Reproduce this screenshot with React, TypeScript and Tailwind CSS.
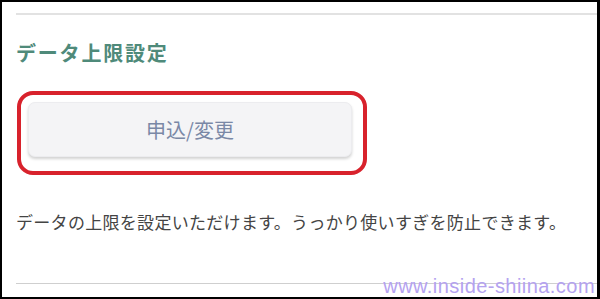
import React from "react";

export default function App() {
  return (
    <div className="relative w-[600px] h-[299px] overflow-hidden border-2 border-r-[3px] border-black bg-white font-['Noto_Sans_CJK_JP','Noto_Sans',sans-serif]">
      <div className="flex flex-col pl-[14px] pt-[11px]">
        <div className="h-[2px] bg-[#e2e2e2]" />
        <h2 className="mt-[25px] text-[20px] font-bold leading-[26px] tracking-[1.8px] text-[#4f8a7a]">
          データ上限設定
        </h2>
        <div className="ml-px mt-[25px] flex h-[84px] w-[350px] items-start rounded-[16px] border-4 border-[#d8222c] pl-[7px] pt-[7px]">
          <div className="flex h-[55px] w-[324px] items-center justify-center rounded-[7px] border border-[#ececef] bg-[#f4f4f6] shadow-[0_2px_3px_rgba(0,0,0,0.18)]">
            <span className="text-[20px] leading-none text-[#7a88a6]">申込/変更</span>
          </div>
        </div>
        <p className="mt-[35px] text-[17px] leading-[24px] tracking-[0.3px] text-[#444]">
          データの上限を設定いただけます。うっかり使いすぎを防止できます。
        </p>
        <div className="mt-[49px] h-px bg-[#cfcfcf]" />
      </div>
      <span className="absolute bottom-[0px] right-[2px] font-['Liberation_Sans',sans-serif] text-[20px] leading-[22px] tracking-[0.45px] text-[#b4a2f0]">
        www.inside-shiina.com
      </span>
    </div>
  );
}
